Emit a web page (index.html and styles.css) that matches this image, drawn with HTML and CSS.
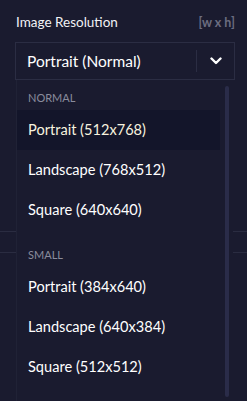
FILE: index.html
```html
<!DOCTYPE html>
<html>
<head>
  <title>Image Resolution</title>
  <link rel="stylesheet" href="styles.css">
</head>
<body>
  <div class="panel">
    <div class="field">
      <div class="field-head">
        <span class="field-label">Image Resolution</span>
        <span class="field-hint">[w x h]</span>
      </div>

      <div class="select">
        <div class="select-box">
          <span class="select-value">Portrait (Normal)</span>
          <span class="select-sep"></span>
          <span class="select-arrow">
            <svg width="12" height="8" viewBox="0 0 12 8">
              <path d="M1.5 1.5 L6 6 L10.5 1.5" fill="none" stroke="#fff" stroke-width="2.4" stroke-linecap="round" stroke-linejoin="round"/>
            </svg>
          </span>
        </div>

        <div class="menu">
          <div class="group">
            <div class="group-title">NORMAL</div>
            <div class="option selected">Portrait (512x768)</div>
            <div class="option">Landscape (768x512)</div>
            <div class="option">Square (640x640)</div>
          </div>
          <div class="group">
            <div class="group-title">SMALL</div>
            <div class="option">Portrait (384x640)</div>
            <div class="option">Landscape (640x384)</div>
            <div class="option">Square (512x512)</div>
          </div>
          <div class="scrollbar"></div>
        </div>
      </div>
    </div>

    <div class="divider"></div>
  </div>
</body>
</html>
```

FILE: styles.css
```css
html,
body {
  height: 100%;
}

body {
  margin: 0;
  background-color: #1a1b2f;
  font-family: Lato, "Noto Sans", sans-serif;
  color: #fff;
}

.panel {
  min-height: 100%;
  padding-top: 14px;
  box-sizing: border-box;
}

.field {
  padding: 0 12px 0 15px;
}

.field-head {
  display: flex;
  justify-content: space-between;
  align-items: center;
  height: 16px;
  padding-left: 1px;
  margin-bottom: 12px;
}

.field-label {
  font-size: 13.5px;
  color: #f2f2f5;
}

.field-hint {
  font-size: 12.5px;
  font-weight: bold;
  color: #6b6d80;
}

.select {
  position: relative;
  z-index: 2;
}

.select-box {
  display: flex;
  align-items: center;
  height: 36px;
  border: 1px solid #2b2d43;
  padding-left: 11px;
}

.select-value {
  flex: 1;
  font-size: 15.5px;
}

.select-sep {
  width: 1px;
  height: 22px;
  background-color: #2b2d43;
}

.select-arrow {
  display: flex;
  justify-content: center;
  align-items: center;
  width: 37px;
}

.menu {
  position: absolute;
  top: 38px;
  left: 1px;
  right: 2px;
  height: 321px;
  padding-top: 6px;
  background-color: #1a1b2f;
  border-left: 1px solid #202236;
}

.group + .group {
  margin-top: 13px;
}

.group-title {
  height: 24px;
  line-height: 24px;
  padding-left: 11px;
  font-size: 11px;
  color: #8a8c9c;
}

.option {
  height: 40px;
  line-height: 40px;
  padding-left: 11px;
  margin-right: 13px;
  font-size: 14.6px;
  color: #fff;
}

.option.selected {
  background-color: #13152a;
  color: #f7f2df;
}

.scrollbar {
  position: absolute;
  top: 6px;
  right: 4px;
  width: 4px;
  height: 311px;
  border-radius: 2px;
  background-color: #2a2c49;
}

.divider {
  height: 20px;
  margin-top: 151px;
  border-top: 1px solid #2a2c41;
  border-bottom: 1px solid #2a2c41;
}
```
